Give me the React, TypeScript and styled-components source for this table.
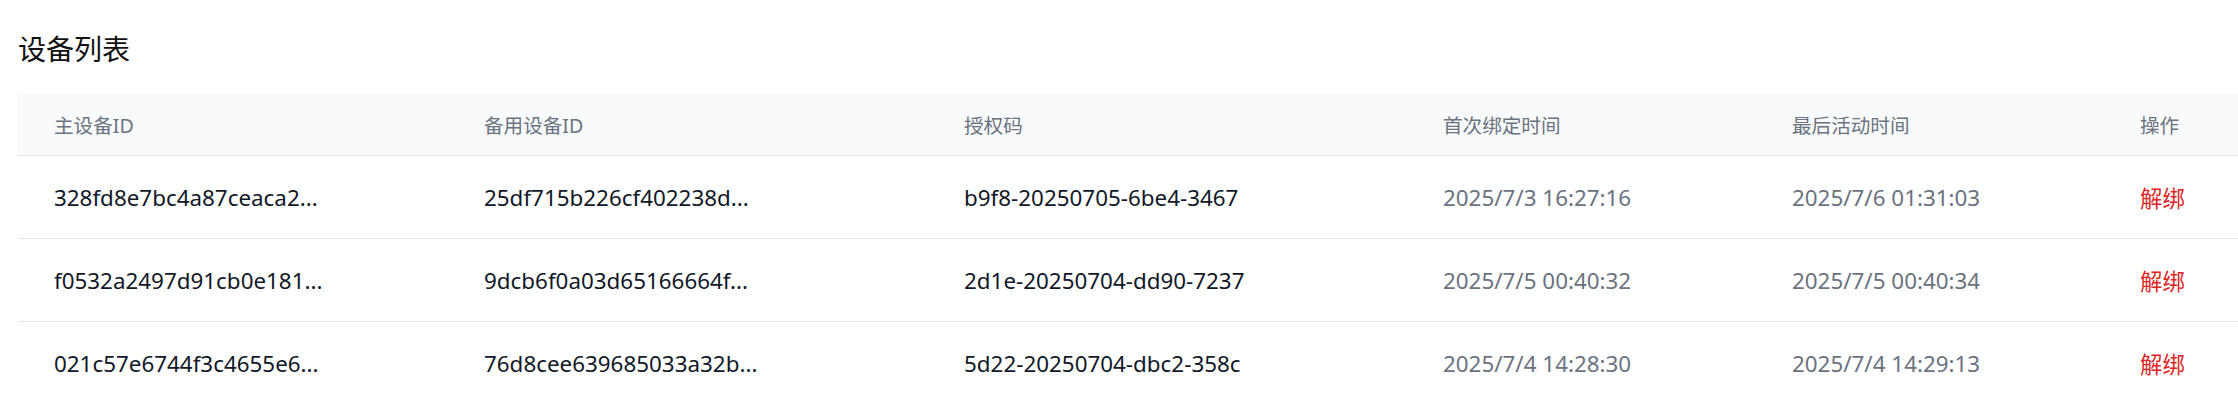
import React from "react";
import styled, { createGlobalStyle } from "styled-components";

const devices = [
  {
    primary: "328fd8e7bc4a87ceaca2...",
    backup: "25df715b226cf402238d...",
    code: "b9f8-20250705-6be4-3467",
    boundAt: "2025/7/3 16:27:16",
    activeAt: "2025/7/6 01:31:03",
  },
  {
    primary: "f0532a2497d91cb0e181...",
    backup: "9dcb6f0a03d65166664f...",
    code: "2d1e-20250704-dd90-7237",
    boundAt: "2025/7/5 00:40:32",
    activeAt: "2025/7/5 00:40:34",
  },
  {
    primary: "021c57e6744f3c4655e6...",
    backup: "76d8cee639685033a32b...",
    code: "5d22-20250704-dbc2-358c",
    boundAt: "2025/7/4 14:28:30",
    activeAt: "2025/7/4 14:29:13",
  },
];

const headers = ["主设备ID", "备用设备ID", "授权码", "首次绑定时间", "最后活动时间", "操作"];

function App() {
  return (
    <>
      <GlobalStyle />
      <Page>
        <Title>设备列表</Title>
        <Table>
          <HeadRow>
            {headers.map((h) => (
              <HeadCell key={h}>{h}</HeadCell>
            ))}
          </HeadRow>
          {devices.map((d, i) => (
            <Row key={d.code} $last={i === devices.length - 1}>
              <Cell>{d.primary}</Cell>
              <Cell>{d.backup}</Cell>
              <Cell>{d.code}</Cell>
              <Cell $muted>{d.boundAt}</Cell>
              <Cell $muted>{d.activeAt}</Cell>
              <Cell>
                <UnbindButton>解绑</UnbindButton>
              </Cell>
            </Row>
          ))}
        </Table>
      </Page>
    </>
  );
}

const GlobalStyle = createGlobalStyle`
  body {
    margin: 0;
    background: #ffffff;
    overflow: hidden;
    font-family: "Noto Sans", "Noto Sans CJK SC", sans-serif;
  }
`;

const Page = styled.div`
  padding: 28px 0 0 18px;
`;

const Title = styled.h2`
  margin: 0 0 23px;
  font-size: 28px;
  line-height: 42px;
  font-weight: 400;
  color: #111111;
`;

const Table = styled.div`
  width: 2220px;
`;

const columns = "430px 480px 479px 349px 348px 1fr";

const HeadRow = styled.div`
  display: grid;
  grid-template-columns: ${columns};
  height: 62px;
  align-items: center;
  background: #f9fafb;
  border-bottom: 1px solid #e5e7eb;
`;

const HeadCell = styled.div`
  padding-left: 36px;
  font-size: 19.6px;
  color: #6b7280;
  white-space: nowrap;
`;

const Row = styled.div<{ $last?: boolean }>`
  display: grid;
  grid-template-columns: ${columns};
  height: 82px;
  align-items: center;
  border-bottom: 1px solid ${(p) => (p.$last ? "transparent" : "#e5e7eb")};
`;

const Cell = styled.div<{ $muted?: boolean }>`
  padding-left: 36px;
  font-size: 22.4px;
  color: ${(p) => (p.$muted ? "#6b7280" : "#111827")};
  white-space: nowrap;
`;

const UnbindButton = styled.button`
  padding: 0;
  border: none;
  background: none;
  font: inherit;
  color: #e02424;
  cursor: pointer;
`;

export default App;
